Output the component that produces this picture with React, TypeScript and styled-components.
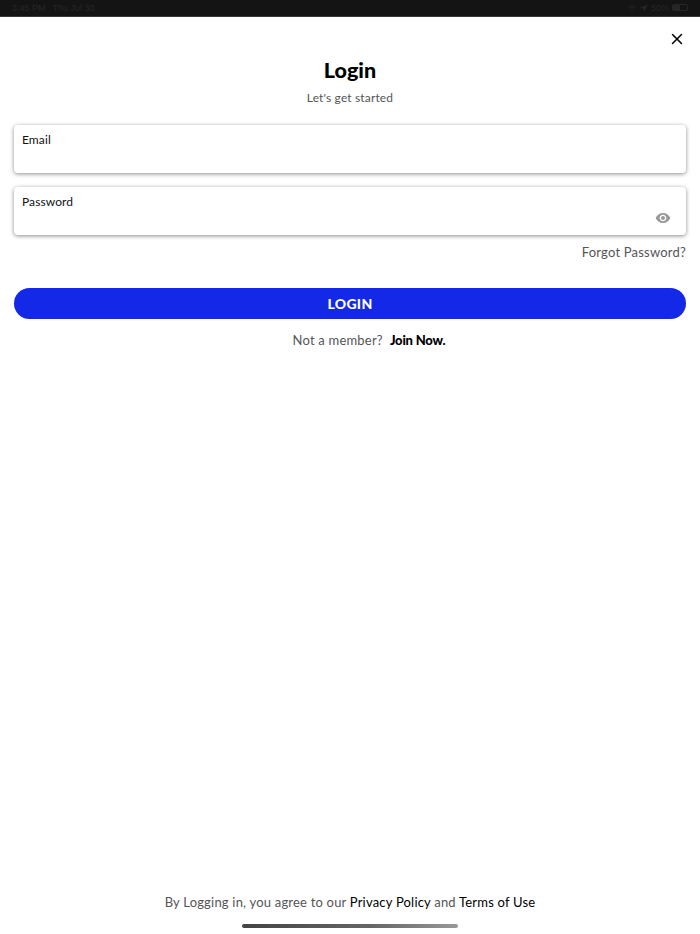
import { createGlobalStyle } from "styled-components"
import styled from "styled-components"
import { X, Wifi, Navigation } from "lucide-react"
import { MdVisibility } from "react-icons/md"

const GlobalStyle = createGlobalStyle`
  html, body {
    margin: 0;
    padding: 0;
    background: #fff;
  }
  * {
    box-sizing: border-box;
  }
`

const Page = styled.div`
  width: 700px;
  height: 934px;
  display: flex;
  flex-direction: column;
  overflow: hidden;
  background: #fff;
  font-family: "Lato", "Liberation Sans", sans-serif;
  color: #000;
`

const StatusBar = styled.div`
  height: 17px;
  flex: none;
  padding: 0 12px 1px;
  display: flex;
  align-items: center;
  justify-content: space-between;
  background: #141414;
  border-bottom: 1px solid #3a3a3a;
  color: #262626;
  font-family: "Liberation Sans", sans-serif;
  font-size: 9px;
`

const StatusGroup = styled.div`
  display: flex;
  align-items: center;
  gap: 3px;
`

const StatusTime = styled.span`
  margin-right: 4px;
`

const Battery = styled.div`
  width: 16px;
  height: 7px;
  border: 1px solid #262626;
  border-radius: 2px;
  background: linear-gradient(90deg, #262626 50%, transparent 50%);
`

const Header = styled.div`
  display: flex;
  justify-content: flex-end;
  padding: 13px 14px 0 0;
  height: 41px;
`

const CloseButton = styled.button`
  width: 18px;
  height: 18px;
  padding: 0;
  border: none;
  background: none;
  color: #000;
  display: flex;
  align-items: center;
  justify-content: center;
`

const Title = styled.h1`
  margin: 0;
  text-align: center;
  font-size: 21.5px;
  line-height: 24px;
  font-weight: 900;
`

const Subtitle = styled.p`
  margin: 8px 0 0;
  text-align: center;
  font-size: 12px;
  line-height: 16px;
  letter-spacing: 0.15px;
  color: #555;
`

const Form = styled.form`
  display: flex;
  flex-direction: column;
  padding: 0 14px;
  margin-top: 19px;
`

const Field = styled.div`
  position: relative;
  height: 48px;
  padding: 7px 8px;
  margin-bottom: 14px;
  background: #fff;
  border-radius: 4px;
  box-shadow: 0 1px 4px rgba(0, 0, 0, 0.45);
`

const FieldLabel = styled.label`
  display: block;
  font-size: 12px;
  line-height: 15px;
  letter-spacing: 0.1px;
  color: #111;
`

const EyeIcon = styled.span`
  position: absolute;
  right: 15px;
  top: 23px;
  display: flex;
  color: #999;
`

const Forgot = styled.a`
  margin-top: -6px;
  text-align: right;
  font-size: 13px;
  line-height: 18px;
  letter-spacing: 0.2px;
  color: #555;
`

const LoginButton = styled.button`
  height: 31px;
  margin-top: 27px;
  border: none;
  border-radius: 16px;
  background: #1428e8;
  color: #fff;
  font-family: inherit;
  font-size: 14px;
  font-weight: 900;
  letter-spacing: 0.3px;
`

const JoinRow = styled.div`
  display: flex;
  justify-content: center;
  gap: 7px;
  margin-top: 12px;
  padding-left: 38px;
  font-size: 13px;
  line-height: 18px;
  letter-spacing: 0.2px;
  color: #555;
`

const JoinLink = styled.a`
  font-weight: 900;
  letter-spacing: -0.2px;
  color: #000;
`

const Footer = styled.div`
  margin-top: auto;
  display: flex;
  flex-direction: column;
  align-items: center;
  padding-bottom: 6px;
`

const Legal = styled.p`
  margin: 0 0 13px;
  font-size: 13px;
  line-height: 18px;
  letter-spacing: 0.2px;
  color: #555;
`

const LegalLink = styled.a`
  color: #000;
`

const HomeBar = styled.div`
  width: 216px;
  height: 4px;
  border-radius: 2px;
  background: linear-gradient(90deg, #444, #666 60%, #999);
`

export default function App() {
  return (
    <Page>
      <GlobalStyle />
      <StatusBar>
        <StatusGroup>
          <StatusTime>3:45 PM</StatusTime>
          <span>Thu Jul 30</span>
        </StatusGroup>
        <StatusGroup>
          <Wifi size={10} />
          <Navigation size={8} fill="#262626" />
          <span>50%</span>
          <Battery />
        </StatusGroup>
      </StatusBar>
      <Header>
        <CloseButton aria-label="Close">
          <X size={18} strokeWidth={2} />
        </CloseButton>
      </Header>
      <Title>Login</Title>
      <Subtitle>Let's get started</Subtitle>
      <Form>
        <Field>
          <FieldLabel>Email</FieldLabel>
        </Field>
        <Field>
          <FieldLabel>Password</FieldLabel>
          <EyeIcon>
            <MdVisibility size={16} />
          </EyeIcon>
        </Field>
        <Forgot>Forgot Password?</Forgot>
        <LoginButton type="button">LOGIN</LoginButton>
      </Form>
      <JoinRow>
        <span>Not a member?</span>
        <JoinLink>Join Now.</JoinLink>
      </JoinRow>
      <Footer>
        <Legal>
          By Logging in, you agree to our <LegalLink>Privacy Policy</LegalLink> and{" "}
          <LegalLink>Terms of Use</LegalLink>
        </Legal>
        <HomeBar />
      </Footer>
    </Page>
  )
}
